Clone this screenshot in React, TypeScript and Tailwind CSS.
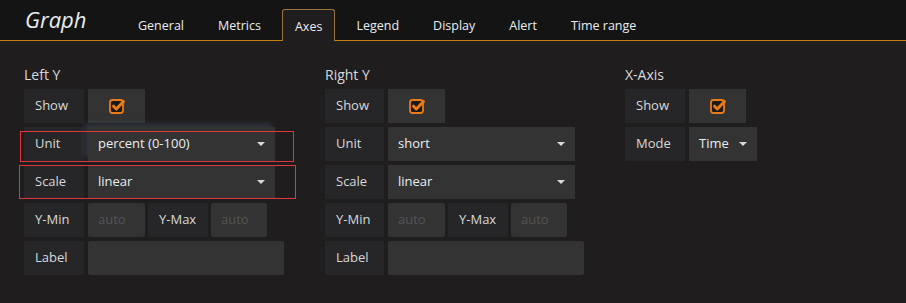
import { ReactNode } from "react";

const tabs = ["General", "Metrics", "Axes", "Legend", "Display", "Alert", "Time range"];

function Label({ children, w = "w-[60px]" }: { children: ReactNode; w?: string }) {
  return (
    <div className={`${w} h-full flex items-center pl-[11px] bg-[#262628] text-[13px] text-[#d8d9da] shrink-0`}>
      {children}
    </div>
  );
}

function Check() {
  return (
    <div className="w-[57px] h-full bg-[#333333] flex items-center justify-center">
      <svg width="18" height="18" viewBox="0 0 18 18">
        <rect x="2" y="3" width="13" height="13" rx="2.5" fill="#1b1a1a" stroke="#eb7b18" strokeWidth="1.8" />
        <path d="M5.5 9.2 L8.3 12 L15.5 4.5" fill="none" stroke="#eb7b18" strokeWidth="3" strokeLinecap="round" strokeLinejoin="round" />
      </svg>
    </div>
  );
}

function Select({ value, w, glow }: { value: string; w: string; glow?: boolean }) {
  return (
    <div
      className={`${w} h-full bg-[#333333] flex items-center justify-between pl-[10px] pr-[10px] text-[13px] text-[#e9edf2] ${
        glow ? "shadow-[-3px_-3px_6px_rgba(82,110,140,0.35)]" : ""
      }`}
    >
      <span>{value}</span>
      <span className="w-0 h-0 border-l-[4px] border-r-[4px] border-t-[4px] border-l-transparent border-r-transparent border-t-[#d8d9da]" />
    </div>
  );
}

function Input({ w, placeholder }: { w: string; placeholder?: string }) {
  return (
    <div className={`${w} h-full bg-[#333333] rounded-[2px] flex items-center pl-[10px] text-[13px] text-[#555555] shrink-0`}>
      {placeholder}
    </div>
  );
}

function Row({ children }: { children: ReactNode }) {
  return <div className="h-[34px] flex gap-[4px]">{children}</div>;
}

function YAxis({ title, unit, glow, marks, lw }: { title: string; unit: string; glow?: boolean; marks?: boolean; lw: string }) {
  return (
    <div className="flex flex-col">
      <div className="h-[30px] pt-[5px] text-[14px] text-[#d8d9da]">{title}</div>
      <div className="flex flex-col gap-[4px]">
        <Row>
          <Label w={lw}>Show</Label>
          <Check />
        </Row>
        <div className="relative">
          <Row>
            <Label w={lw}>Unit</Label>
            <Select value={unit} w="w-[187px]" glow={glow} />
          </Row>
          {marks && <div className="absolute left-[-4px] top-[4px] w-[274px] h-[31px] border border-[#e0383a]" />}
        </div>
        <div className="relative">
          <Row>
            <Label w={lw}>Scale</Label>
            <Select value="linear" w="w-[187px]" />
          </Row>
          {marks && <div className="absolute left-[-5px] top-[0px] w-[277px] h-[34px] border border-[#e0383a]" />}
        </div>
        <div className="h-[34px] flex">
          <Label w={lw}>Y-Min</Label>
          <div className="w-[4px]" />
          <Input w="w-[57px]" placeholder="auto" />
          <div className="w-[3px]" />
          <Label>Y-Max</Label>
          <div className="w-[3px]" />
          <Input w="w-[56px]" placeholder="auto" />
        </div>
        <Row>
          <Label w={lw}>Label</Label>
          <Input w="w-[196px]" />
        </Row>
      </div>
    </div>
  );
}

export default function App() {
  return (
    <div className="w-[906px] h-[303px] bg-[#1f1d1e] font-['Open_Sans',sans-serif] overflow-hidden">
      <div className="h-[41px] bg-[#141414] border-b border-[#c47f0e] flex items-end">
        <div className="self-start pt-[3px] pl-[25px] w-[121px] text-[22px] italic text-[#e9edf2]">Graph</div>
        <div className="flex items-end h-full">
          {tabs.map((t) =>
            t === "Axes" ? (
              <div
                key={t}
                className="mx-[4px] px-[12px] pt-[3px] h-[32px] -mb-[1px] bg-[#1f1d1e] border border-b-0 border-[#9c7440] rounded-t-[3px] text-[12.5px] text-[#e9edf2] flex items-center"
              >
                {t}
              </div>
            ) : (
              <div key={t} className="mx-[4px] px-[13px] pt-[3px] h-[31px] text-[12.5px] text-[#e9edf2] flex items-center">
                {t}
              </div>
            )
          )}
        </div>
      </div>
      <div className="flex pl-[24px] pt-[18px]">
        <div className="w-[301px]">
          <YAxis title="Left Y" unit="percent (0-100)" glow marks lw="w-[60px]" />
        </div>
        <div className="w-[300px]">
          <YAxis title="Right Y" unit="short" lw="w-[59px]" />
        </div>
        <div className="flex flex-col">
          <div className="h-[30px] pt-[5px] text-[14px] text-[#d8d9da]">X-Axis</div>
          <div className="flex flex-col gap-[4px]">
            <Row>
              <Label w="w-[60px]">Show</Label>
              <Check />
            </Row>
            <Row>
              <Label w="w-[60px]">Mode</Label>
              <Select value="Time" w="w-[68px]" />
            </Row>
          </div>
        </div>
      </div>
    </div>
  );
}
